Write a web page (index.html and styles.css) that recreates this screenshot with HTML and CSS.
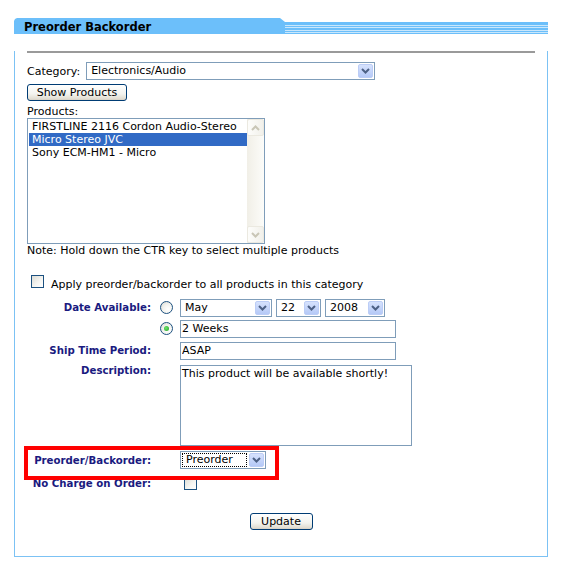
FILE: index.html
```html
<!DOCTYPE html>
<html>
<head>
<meta charset="utf-8">
<title>Preorder Backorder</title>
<link rel="stylesheet" href="styles.css">
</head>
<body>
<div class="panel">
  <div class="head">
    <div class="tab">Preorder Backorder</div>
    <div class="stripes"></div>
  </div>
  <div class="pbody">
    <div class="rule"></div>
    <div class="cat-row">
      <span>Category:</span>
      <div class="sel sel-cat"><span class="txt">Electronics/Audio</span><span class="arr"><svg width="9" height="6" viewBox="0 0 9 6"><path d="M1 1 L4.5 4.5 L8 1" fill="none" stroke="#4d6185" stroke-width="2"/></svg></span></div>
    </div>
    <button class="btn btn-show">Show Products</button>
    <div class="lbl-products">Products:</div>
    <div class="listbox">
      <div class="items">
        <div class="item">FIRSTLINE 2116 Cordon Audio-Stereo</div>
        <div class="item picked">Micro Stereo JVC</div>
        <div class="item">Sony ECM-HM1 - Micro</div>
      </div>
      <div class="vscroll">
        <div class="sbtn"><svg width="9" height="6" viewBox="0 0 9 6"><path d="M1 5 L4.5 1.5 L8 5" fill="none" stroke="#c9c6b6" stroke-width="2"/></svg></div>
        <div class="track"></div>
        <div class="sbtn"><svg width="9" height="6" viewBox="0 0 9 6"><path d="M1 1 L4.5 4.5 L8 1" fill="none" stroke="#c9c6b6" stroke-width="2"/></svg></div>
      </div>
    </div>
    <div class="note">Note: Hold down the CTR key to select multiple products</div>
    <div class="apply">
      <span class="chk"></span>
      <span class="apply-lbl">Apply preorder/backorder to all products in this category</span>
    </div>
    <div class="form">
      <div class="flabel">Date Available:</div>
      <div class="rcell"><span class="radio"></span></div>
      <div class="date">
        <div class="sel sel-month"><span class="txt">May</span><span class="arr"><svg width="9" height="6" viewBox="0 0 9 6"><path d="M1 1 L4.5 4.5 L8 1" fill="none" stroke="#4d6185" stroke-width="2"/></svg></span></div>
        <div class="sel sel-day"><span class="txt">22</span><span class="arr"><svg width="9" height="6" viewBox="0 0 9 6"><path d="M1 1 L4.5 4.5 L8 1" fill="none" stroke="#4d6185" stroke-width="2"/></svg></span></div>
        <div class="sel sel-year"><span class="txt">2008</span><span class="arr"><svg width="9" height="6" viewBox="0 0 9 6"><path d="M1 1 L4.5 4.5 L8 1" fill="none" stroke="#4d6185" stroke-width="2"/></svg></span></div>
      </div>

      <div></div>
      <div class="rcell"><span class="radio on"><span class="dot"></span></span></div>
      <input class="tin" type="text" value="2 Weeks">

      <div class="flabel">Ship Time Period:</div>
      <div></div>
      <input class="tin" type="text" value="ASAP">

      <div class="flabel top">Description:</div>
      <div></div>
      <textarea class="desc">This product will be available shortly!</textarea>

      <div class="flabel">Preorder/Backorder:</div>
      <div></div>
      <div class="sel sel-pre"><span class="txt focus">Preorder</span><span class="arr"><svg width="9" height="6" viewBox="0 0 9 6"><path d="M1 1 L4.5 4.5 L8 1" fill="none" stroke="#4d6185" stroke-width="2"/></svg></span></div>

      <div class="flabel">No Charge on Order:</div>
      <div></div>
      <div><span class="chk chk-nc"></span></div>
    </div>
    <div class="actions"><button class="btn btn-upd">Update</button></div>
  </div>
</div>
<div class="highlight"></div>
</body>
</html>
```

FILE: styles.css
```css
html, body {
  margin: 0;
  padding: 0;
  background: #ffffff;
}
body {
  font-family: "DejaVu Sans", Verdana, sans-serif;
  font-size: 11px;
  color: #000;
}
.panel {
  margin: 18px 0 0 14px;
  width: 534px;
}
.head {
  display: flex;
  height: 16px;
}
.tab {
  width: 271px;
  height: 16px;
  background: #6cbffa;
  font-weight: bold;
  font-size: 11.5px;
  line-height: 18px;
  padding-left: 10px;
  box-sizing: border-box;
  color: #000;
  clip-path: polygon(0 3px, 1px 1px, 3px 0, 266px 0, 271px 4px, 271px 16px, 0 16px);
}
.stripes {
  flex: 1;
  align-self: flex-end;
  height: 12px;
  background: linear-gradient(#6cbffa 0, #6cbffa 3px, #c9e7fc 3px, #c9e7fc 4px, #6cbffa 4px, #6cbffa 5px, #c9e7fc 5px, #c9e7fc 6px, #6cbffa 6px, #6cbffa 8px, #c9e7fc 8px, #c9e7fc 9px, #6cbffa 9px, #6cbffa 10px, #c9e7fc 10px, #c9e7fc 11px, #6cbffa 11px);
}
.pbody {
  border: 1px solid #7cc2f4;
  border-top: none;
  padding: 0 12px 26px 12px;
}
.rule {
  margin-top: 17px;
  height: 2px;
  background: #9a9a9a;
}
.cat-row {
  margin-top: 9px;
  display: flex;
  align-items: center;
  gap: 6px;
  height: 18px;
}
.sel {
  display: flex;
  box-sizing: border-box;
  height: 18px;
  border: 1px solid #7f9db9;
  background: #fff;
}
.sel .txt {
  flex: 1;
  padding-left: 4px;
  line-height: 16px;
  white-space: nowrap;
  overflow: hidden;
}
.sel .txt.focus {
  margin: 1px;
  padding-left: 3px;
  line-height: 12px;
  border: 1px dotted #000;
}
.sel .arr {
  width: 15px;
  margin: 1px;
  box-sizing: border-box;
  border: 1px solid #bccdf6;
  border-radius: 2px;
  background: linear-gradient(#d6e2fd, #b5c9f7);
  display: flex;
  align-items: center;
  justify-content: center;
}
.sel-cat { width: 289px; }
.sel-month { width: 92px; }
.sel-day { width: 45px; }
.sel-year { width: 60px; }
.sel-pre { width: 86px; }

.btn {
  display: block;
  box-sizing: border-box;
  height: 17px;
  padding: 0;
  font-family: "DejaVu Sans", Verdana, sans-serif;
  font-size: 11px;
  line-height: 14px;
  color: #000;
  border: 1px solid #003c74;
  border-radius: 3px;
  background: linear-gradient(#ffffff, #f3f3ee 60%, #e2ded3 90%, #d6d0c5);
}
.btn-show {
  margin-top: 4px;
  width: 100px;
}
.lbl-products {
  margin-top: 4px;
  line-height: 13px;
}
.listbox {
  display: flex;
  box-sizing: border-box;
  width: 238px;
  height: 126px;
  border: 1px solid #7f9db9;
  background: #fff;
}
.items {
  flex: 1;
  padding: 1px 0 0 1px;
}
.item {
  line-height: 13px;
  height: 13px;
  padding-left: 3px;
  white-space: nowrap;
}
.item.picked {
  background: #316ac5;
  color: #fff;
}
.vscroll {
  width: 17px;
  display: flex;
  flex-direction: column;
  background: linear-gradient(to right, #f1efe7, #fcfcf9);
}
.sbtn {
  height: 17px;
  box-sizing: border-box;
  border: 1px solid #ebe9e0;
  border-radius: 2px;
  background: linear-gradient(to right, #fdfdfb, #f1f0ea);
  display: flex;
  align-items: center;
  justify-content: center;
}
.track { flex: 1; }
.note {
  line-height: 13px;
}
.apply {
  margin-top: 18px;
  display: flex;
  align-items: flex-start;
}
.chk {
  display: inline-block;
  width: 13px;
  height: 13px;
  box-sizing: border-box;
  border: 1px solid #1c5180;
  background: linear-gradient(135deg, #dcdcd5, #f6f6f3 60%, #ffffff);
}
.apply .chk {
  margin-left: 4px;
}
.apply-lbl {
  margin-left: 7px;
  padding-top: 3px;
  line-height: 13px;
}
.form {
  margin-top: 6px;
  display: grid;
  grid-template-columns: 124px 29px 1fr;
  grid-template-rows: 21px 21px 23px 86px 24px 22px;
  align-items: center;
}
.flabel {
  text-align: right;
  font-weight: bold;
  font-size: 10.2px;
  color: #1a1a80;
  line-height: 13px;
  white-space: nowrap;
}
.flabel.top {
  align-self: start;
  margin-top: 2px;
}
.rcell {
  display: flex;
  align-items: center;
}
.radio {
  margin-left: 9px;
  width: 13px;
  height: 13px;
  box-sizing: border-box;
  border: 1px solid #1c5180;
  border-radius: 50%;
  background: radial-gradient(circle at 65% 65%, #ffffff, #f2f2ee 50%, #d4d4cc);
  display: flex;
  align-items: center;
  justify-content: center;
}
.radio .dot {
  width: 5px;
  height: 5px;
  border-radius: 50%;
  background: radial-gradient(circle at 40% 40%, #6ee46e, #21a121);
}
.date {
  display: flex;
  gap: 4px;
}
.tin {
  box-sizing: border-box;
  width: 216px;
  height: 18px;
  margin: 0;
  padding: 0 1px;
  border: 1px solid #7f9db9;
  font-family: "DejaVu Sans", Verdana, sans-serif;
  font-size: 11px;
  color: #000;
  outline: none;
}
.desc {
  align-self: start;
  margin: 3px 0 0 0;
  box-sizing: border-box;
  width: 232px;
  height: 81px;
  padding: 1px 1px;
  border: 1px solid #7f9db9;
  font-family: "DejaVu Sans", Verdana, sans-serif;
  font-size: 11px;
  line-height: 13px;
  color: #000;
  resize: none;
  overflow: hidden;
  outline: none;
}
.chk-nc {
  margin-left: 4px;
  display: block;
}
.actions {
  margin-top: 19px;
  display: flex;
  justify-content: center;
}
.btn-upd {
  width: 63px;
}
.highlight {
  position: absolute;
  left: 24px;
  top: 446px;
  width: 255px;
  height: 34px;
  box-sizing: border-box;
  border: 4px solid #ff0000;
}
```
